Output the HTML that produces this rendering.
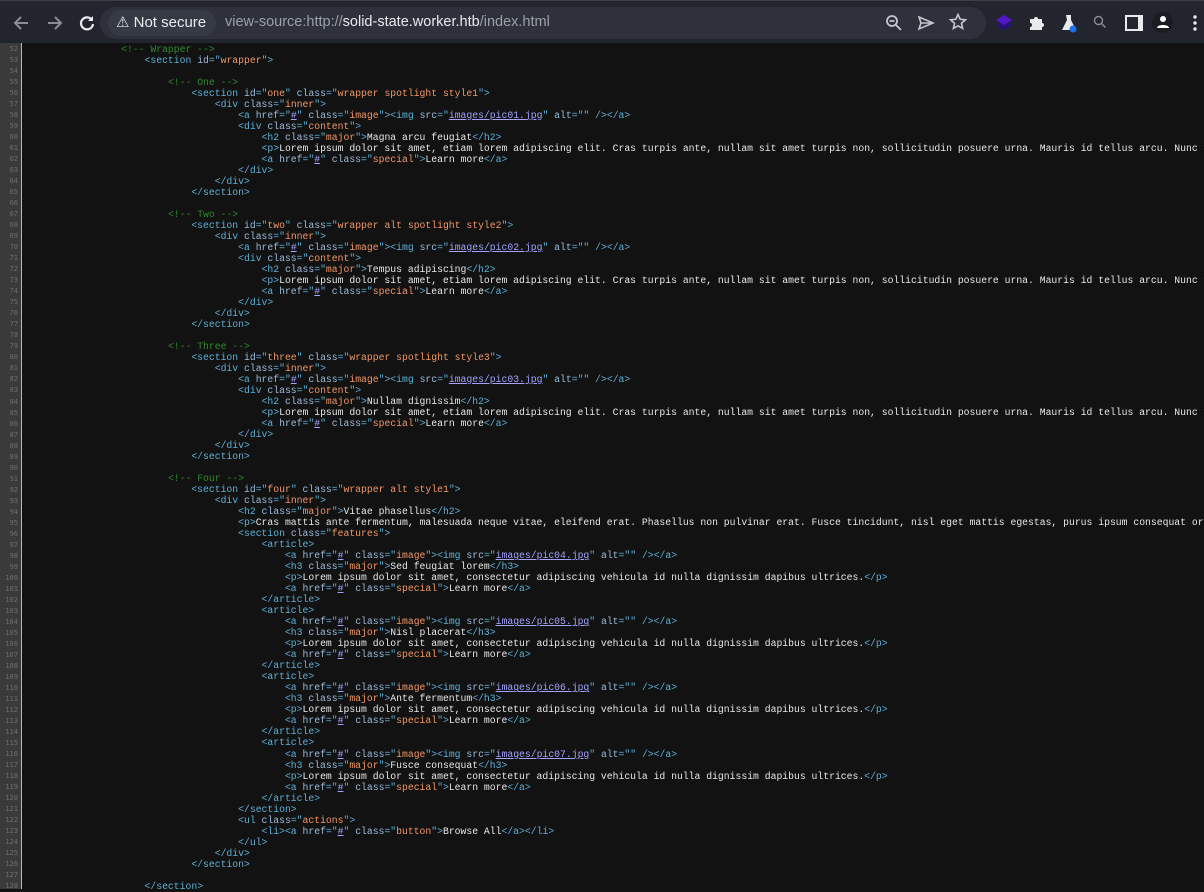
<!DOCTYPE html>
<html><head><meta charset="utf-8"><style>
html,body{margin:0;padding:0;width:1204px;height:889px;overflow:hidden;background:#121212;}
#bar{position:absolute;left:0;top:0;width:1204px;height:43px;background:#23252e;border-top:1px solid #3c3f48;box-sizing:border-box;font-family:"Liberation Sans",sans-serif;}
#omni{position:absolute;left:100px;top:6px;width:886px;height:32px;border-radius:16px;background:#2e313b;}
#chip{position:absolute;left:108px;top:9px;height:26px;width:108px;border-radius:13px;background:#363a45;}
.ic{position:absolute;}
#gut{position:absolute;left:0;top:43px;width:22px;height:846px;background:#3a3a3a;border-right:1px solid #b8b8b8;box-sizing:border-box;}
#gut pre{margin:0;padding-top:1px;font:7px/11.02px "DejaVu Sans Mono",monospace;color:#6e6e6e;text-align:right;padding-right:3px;}
#src{position:absolute;left:27.5px;top:43.5px;margin:0;font:9.75px/11.02px "Liberation Mono","DejaVu Sans Mono",monospace;color:#e8e8e8;white-space:pre;width:1176px;overflow:hidden;}
x-t{color:#5db0d7}x-n{color:#9bbbdc}x-v{color:#f29766}x-c{color:#2f8a2f}x-l{color:#a3a3ff;text-decoration:underline}
</style></head><body>
<div id="bar">
<svg class="ic" style="left:12px;top:12px" width="20" height="20" viewBox="0 0 20 20"><path d="M16 10H4M9 4l-6 6 6 6" stroke="#8a8d94" stroke-width="2" fill="none"/></svg>
<svg class="ic" style="left:44px;top:12px" width="20" height="20" viewBox="0 0 20 20"><path d="M4 10h12M11 4l6 6-6 6" stroke="#8a8d94" stroke-width="2" fill="none"/></svg>
<svg class="ic" style="left:77px;top:12px" width="20" height="20" viewBox="0 0 20 20"><path d="M15 7A6 6 0 1 0 16 11" stroke="#e8eaed" stroke-width="2.2" fill="none"/><path d="M16 3v5h-5z" fill="#e8eaed"/></svg>
<div id="omni"></div><div id="chip"></div>
<div style="position:absolute;left:116px;top:12px;color:#e8eaed;font-size:15px;">⚠ Not secure</div>
<div style="position:absolute;left:225px;top:13px;color:#9aa0a6;font-size:14.5px;">view-source:http://<span style="color:#e8eaed">solid-state.worker.htb</span>/index.html</div>
<svg class="ic" style="left:885px;top:13px" width="18" height="18" viewBox="0 0 18 18"><circle cx="7" cy="7" r="5" stroke="#c4c7cc" stroke-width="1.8" fill="none"/><path d="M4.5 7h5M11 11l5 5" stroke="#c4c7cc" stroke-width="1.8"/></svg>
<svg class="ic" style="left:917px;top:13px" width="18" height="18" viewBox="0 0 18 18"><path d="M2 3l14 6-14 6 2-6z M4 9h12" stroke="#c4c7cc" stroke-width="1.6" fill="none"/></svg>
<svg class="ic" style="left:949px;top:12px" width="18" height="18" viewBox="0 0 18 18"><path d="M9 1.5l2.2 4.8 5.2.5-3.9 3.5 1.1 5.1L9 12.8l-4.6 2.6 1.1-5.1L1.6 6.8l5.2-.5z" stroke="#c4c7cc" stroke-width="1.6" fill="none"/></svg>
<svg class="ic" style="left:995px;top:13px" width="18" height="18" viewBox="0 0 18 18"><path d="M9 6l8 5-8 5-8-5z" fill="#2a0f7a"/><path d="M9 1l8 5-8 5-8-5z" fill="#5217c9"/></svg>
<svg class="ic" style="left:1027px;top:13px" width="18" height="18" viewBox="0 0 18 18"><path d="M3 5h4a2 2 0 1 1 4 0h4v4a2 2 0 1 1 0 4v3H3v-3a2 2 0 1 0 0-4z" fill="#e8eaed"/></svg>
<svg class="ic" style="left:1060px;top:12px" width="18" height="20" viewBox="0 0 18 20"><path d="M6 2h5v5l5 10H2l5-10z" fill="#e8eaed"/><circle cx="13" cy="16" r="3.5" fill="#1a73e8"/></svg>
<svg class="ic" style="left:1093px;top:14px" width="14" height="14" viewBox="0 0 14 14"><circle cx="5.5" cy="5.5" r="4" stroke="#8a8d94" stroke-width="1.4" fill="none"/><path d="M8.5 8.5l4 4" stroke="#8a8d94" stroke-width="1.4"/></svg>
<div style="position:absolute;left:1125px;top:14px;width:11px;height:12px;border:2px solid #e8eaed;border-right-width:5px;"></div>
<div style="position:absolute;left:1152px;top:11px;width:21px;height:21px;border-radius:50%;background:#1b1c22;"></div>
<svg class="ic" style="left:1155px;top:13px" width="16" height="16" viewBox="0 0 16 16"><circle cx="8" cy="5" r="3" fill="#fff"/><path d="M2 14c0-4 12-4 12 0z" fill="#fff"/></svg>
<svg class="ic" style="left:1192px;top:13px" width="6" height="18" viewBox="0 0 6 18"><circle cx="3" cy="3" r="1.7" fill="#e8eaed"/><circle cx="3" cy="9" r="1.7" fill="#e8eaed"/><circle cx="3" cy="15" r="1.7" fill="#e8eaed"/></svg>
</div>
<div id="gut"><pre>52
53
54
55
56
57
58
59
60
61
62
63
64
65
66
67
68
69
70
71
72
73
74
75
76
77
78
79
80
81
82
83
84
85
86
87
88
89
90
91
92
93
94
95
96
97
98
99
100
101
102
103
104
105
106
107
108
109
110
111
112
113
114
115
116
117
118
119
120
121
122
123
124
125
126
127
128</pre></div>
<pre id="src">                <x-c>&lt;!-- Wrapper --&gt;</x-c>
                    <x-t>&lt;section <x-n>id</x-n>="<x-v>wrapper</x-v>"&gt;</x-t>

                        <x-c>&lt;!-- One --&gt;</x-c>
                            <x-t>&lt;section <x-n>id</x-n>="<x-v>one</x-v>" <x-n>class</x-n>="<x-v>wrapper spotlight style1</x-v>"&gt;</x-t>
                                <x-t>&lt;div <x-n>class</x-n>="<x-v>inner</x-v>"&gt;</x-t>
                                    <x-t>&lt;a <x-n>href</x-n>="<x-l>#</x-l>" <x-n>class</x-n>="<x-v>image</x-v>"&gt;&lt;img <x-n>src</x-n>="<x-l>images/pic01.jpg</x-l>" <x-n>alt</x-n>="" /&gt;&lt;/a&gt;</x-t>
                                    <x-t>&lt;div <x-n>class</x-n>="<x-v>content</x-v>"&gt;</x-t>
                                        <x-t>&lt;h2 <x-n>class</x-n>="<x-v>major</x-v>"&gt;</x-t>Magna arcu feugiat<x-t>&lt;/h2&gt;</x-t>
                                        <x-t>&lt;p&gt;</x-t>Lorem ipsum dolor sit amet, etiam lorem adipiscing elit. Cras turpis ante, nullam sit amet turpis non, sollicitudin posuere urna. Mauris id tellus arcu. Nunc vehicula id nulla dignissim dapibus.
                                        <x-t>&lt;a <x-n>href</x-n>="<x-l>#</x-l>" <x-n>class</x-n>="<x-v>special</x-v>"&gt;</x-t>Learn more<x-t>&lt;/a&gt;</x-t>
                                    <x-t>&lt;/div&gt;</x-t>
                                <x-t>&lt;/div&gt;</x-t>
                            <x-t>&lt;/section&gt;</x-t>

                        <x-c>&lt;!-- Two --&gt;</x-c>
                            <x-t>&lt;section <x-n>id</x-n>="<x-v>two</x-v>" <x-n>class</x-n>="<x-v>wrapper alt spotlight style2</x-v>"&gt;</x-t>
                                <x-t>&lt;div <x-n>class</x-n>="<x-v>inner</x-v>"&gt;</x-t>
                                    <x-t>&lt;a <x-n>href</x-n>="<x-l>#</x-l>" <x-n>class</x-n>="<x-v>image</x-v>"&gt;&lt;img <x-n>src</x-n>="<x-l>images/pic02.jpg</x-l>" <x-n>alt</x-n>="" /&gt;&lt;/a&gt;</x-t>
                                    <x-t>&lt;div <x-n>class</x-n>="<x-v>content</x-v>"&gt;</x-t>
                                        <x-t>&lt;h2 <x-n>class</x-n>="<x-v>major</x-v>"&gt;</x-t>Tempus adipiscing<x-t>&lt;/h2&gt;</x-t>
                                        <x-t>&lt;p&gt;</x-t>Lorem ipsum dolor sit amet, etiam lorem adipiscing elit. Cras turpis ante, nullam sit amet turpis non, sollicitudin posuere urna. Mauris id tellus arcu. Nunc vehicula id nulla dignissim dapibus.
                                        <x-t>&lt;a <x-n>href</x-n>="<x-l>#</x-l>" <x-n>class</x-n>="<x-v>special</x-v>"&gt;</x-t>Learn more<x-t>&lt;/a&gt;</x-t>
                                    <x-t>&lt;/div&gt;</x-t>
                                <x-t>&lt;/div&gt;</x-t>
                            <x-t>&lt;/section&gt;</x-t>

                        <x-c>&lt;!-- Three --&gt;</x-c>
                            <x-t>&lt;section <x-n>id</x-n>="<x-v>three</x-v>" <x-n>class</x-n>="<x-v>wrapper spotlight style3</x-v>"&gt;</x-t>
                                <x-t>&lt;div <x-n>class</x-n>="<x-v>inner</x-v>"&gt;</x-t>
                                    <x-t>&lt;a <x-n>href</x-n>="<x-l>#</x-l>" <x-n>class</x-n>="<x-v>image</x-v>"&gt;&lt;img <x-n>src</x-n>="<x-l>images/pic03.jpg</x-l>" <x-n>alt</x-n>="" /&gt;&lt;/a&gt;</x-t>
                                    <x-t>&lt;div <x-n>class</x-n>="<x-v>content</x-v>"&gt;</x-t>
                                        <x-t>&lt;h2 <x-n>class</x-n>="<x-v>major</x-v>"&gt;</x-t>Nullam dignissim<x-t>&lt;/h2&gt;</x-t>
                                        <x-t>&lt;p&gt;</x-t>Lorem ipsum dolor sit amet, etiam lorem adipiscing elit. Cras turpis ante, nullam sit amet turpis non, sollicitudin posuere urna. Mauris id tellus arcu. Nunc vehicula id nulla dignissim dapibus.
                                        <x-t>&lt;a <x-n>href</x-n>="<x-l>#</x-l>" <x-n>class</x-n>="<x-v>special</x-v>"&gt;</x-t>Learn more<x-t>&lt;/a&gt;</x-t>
                                    <x-t>&lt;/div&gt;</x-t>
                                <x-t>&lt;/div&gt;</x-t>
                            <x-t>&lt;/section&gt;</x-t>

                        <x-c>&lt;!-- Four --&gt;</x-c>
                            <x-t>&lt;section <x-n>id</x-n>="<x-v>four</x-v>" <x-n>class</x-n>="<x-v>wrapper alt style1</x-v>"&gt;</x-t>
                                <x-t>&lt;div <x-n>class</x-n>="<x-v>inner</x-v>"&gt;</x-t>
                                    <x-t>&lt;h2 <x-n>class</x-n>="<x-v>major</x-v>"&gt;</x-t>Vitae phasellus<x-t>&lt;/h2&gt;</x-t>
                                    <x-t>&lt;p&gt;</x-t>Cras mattis ante fermentum, malesuada neque vitae, eleifend erat. Phasellus non pulvinar erat. Fusce tincidunt, nisl eget mattis egestas, purus ipsum consequat orci.
                                    <x-t>&lt;section <x-n>class</x-n>="<x-v>features</x-v>"&gt;</x-t>
                                        <x-t>&lt;article&gt;</x-t>
                                            <x-t>&lt;a <x-n>href</x-n>="<x-l>#</x-l>" <x-n>class</x-n>="<x-v>image</x-v>"&gt;&lt;img <x-n>src</x-n>="<x-l>images/pic04.jpg</x-l>" <x-n>alt</x-n>="" /&gt;&lt;/a&gt;</x-t>
                                            <x-t>&lt;h3 <x-n>class</x-n>="<x-v>major</x-v>"&gt;</x-t>Sed feugiat lorem<x-t>&lt;/h3&gt;</x-t>
                                            <x-t>&lt;p&gt;</x-t>Lorem ipsum dolor sit amet, consectetur adipiscing vehicula id nulla dignissim dapibus ultrices.<x-t>&lt;/p&gt;</x-t>
                                            <x-t>&lt;a <x-n>href</x-n>="<x-l>#</x-l>" <x-n>class</x-n>="<x-v>special</x-v>"&gt;</x-t>Learn more<x-t>&lt;/a&gt;</x-t>
                                        <x-t>&lt;/article&gt;</x-t>
                                        <x-t>&lt;article&gt;</x-t>
                                            <x-t>&lt;a <x-n>href</x-n>="<x-l>#</x-l>" <x-n>class</x-n>="<x-v>image</x-v>"&gt;&lt;img <x-n>src</x-n>="<x-l>images/pic05.jpg</x-l>" <x-n>alt</x-n>="" /&gt;&lt;/a&gt;</x-t>
                                            <x-t>&lt;h3 <x-n>class</x-n>="<x-v>major</x-v>"&gt;</x-t>Nisl placerat<x-t>&lt;/h3&gt;</x-t>
                                            <x-t>&lt;p&gt;</x-t>Lorem ipsum dolor sit amet, consectetur adipiscing vehicula id nulla dignissim dapibus ultrices.<x-t>&lt;/p&gt;</x-t>
                                            <x-t>&lt;a <x-n>href</x-n>="<x-l>#</x-l>" <x-n>class</x-n>="<x-v>special</x-v>"&gt;</x-t>Learn more<x-t>&lt;/a&gt;</x-t>
                                        <x-t>&lt;/article&gt;</x-t>
                                        <x-t>&lt;article&gt;</x-t>
                                            <x-t>&lt;a <x-n>href</x-n>="<x-l>#</x-l>" <x-n>class</x-n>="<x-v>image</x-v>"&gt;&lt;img <x-n>src</x-n>="<x-l>images/pic06.jpg</x-l>" <x-n>alt</x-n>="" /&gt;&lt;/a&gt;</x-t>
                                            <x-t>&lt;h3 <x-n>class</x-n>="<x-v>major</x-v>"&gt;</x-t>Ante fermentum<x-t>&lt;/h3&gt;</x-t>
                                            <x-t>&lt;p&gt;</x-t>Lorem ipsum dolor sit amet, consectetur adipiscing vehicula id nulla dignissim dapibus ultrices.<x-t>&lt;/p&gt;</x-t>
                                            <x-t>&lt;a <x-n>href</x-n>="<x-l>#</x-l>" <x-n>class</x-n>="<x-v>special</x-v>"&gt;</x-t>Learn more<x-t>&lt;/a&gt;</x-t>
                                        <x-t>&lt;/article&gt;</x-t>
                                        <x-t>&lt;article&gt;</x-t>
                                            <x-t>&lt;a <x-n>href</x-n>="<x-l>#</x-l>" <x-n>class</x-n>="<x-v>image</x-v>"&gt;&lt;img <x-n>src</x-n>="<x-l>images/pic07.jpg</x-l>" <x-n>alt</x-n>="" /&gt;&lt;/a&gt;</x-t>
                                            <x-t>&lt;h3 <x-n>class</x-n>="<x-v>major</x-v>"&gt;</x-t>Fusce consequat<x-t>&lt;/h3&gt;</x-t>
                                            <x-t>&lt;p&gt;</x-t>Lorem ipsum dolor sit amet, consectetur adipiscing vehicula id nulla dignissim dapibus ultrices.<x-t>&lt;/p&gt;</x-t>
                                            <x-t>&lt;a <x-n>href</x-n>="<x-l>#</x-l>" <x-n>class</x-n>="<x-v>special</x-v>"&gt;</x-t>Learn more<x-t>&lt;/a&gt;</x-t>
                                        <x-t>&lt;/article&gt;</x-t>
                                    <x-t>&lt;/section&gt;</x-t>
                                    <x-t>&lt;ul <x-n>class</x-n>="<x-v>actions</x-v>"&gt;</x-t>
                                        <x-t>&lt;li&gt;&lt;a <x-n>href</x-n>="<x-l>#</x-l>" <x-n>class</x-n>="<x-v>button</x-v>"&gt;</x-t>Browse All<x-t>&lt;/a&gt;&lt;/li&gt;</x-t>
                                    <x-t>&lt;/ul&gt;</x-t>
                                <x-t>&lt;/div&gt;</x-t>
                            <x-t>&lt;/section&gt;</x-t>

                    <x-t>&lt;/section&gt;</x-t></pre>
</body></html>
